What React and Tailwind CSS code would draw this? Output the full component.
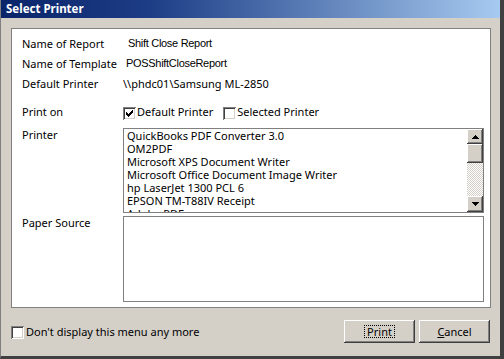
import React from "react";

const raised =
  "shadow-[inset_-1px_-1px_#404040,inset_1px_1px_#ffffff,inset_-2px_-2px_#808080,inset_2px_2px_#d4d0c8]";
const sunken =
  "shadow-[inset_1px_1px_#808080,inset_-1px_-1px_#ffffff,inset_2px_2px_#404040,inset_-2px_-2px_#d4d0c8]";

function Check({ checked, className = "" }) {
  return (
    <span
      className={`w-[13px] h-[13px] bg-white shrink-0 flex items-center justify-center ${sunken} ${className}`}
    >
      {checked && (
        <svg width="7" height="7" viewBox="0 0 7 7" shapeRendering="crispEdges">
          <path
            fill="#000"
            d="M6 0h1v1h-1z M5 1h2v1h-2z M0 2h1v1h-1z M4 2h3v1h-3z M0 3h2v1h-2z M3 3h3v1h-3z M0 4h5v1h-5z M1 5h3v1h-3z M2 6h1v1h-1z"
          />
        </svg>
      )}
    </span>
  );
}

function Arrow({ down }) {
  return (
    <svg width="7" height="4" viewBox="0 0 7 4" shapeRendering="crispEdges">
      <path
        fill="#000"
        d={
          down
            ? "M0 0h7v1h-7z M1 1h5v1h-5z M2 2h3v1h-3z M3 3h1v1h-1z"
            : "M3 0h1v1h-1z M2 1h3v1h-3z M1 2h5v1h-5z M0 3h7v1h-7z"
        }
      />
    </svg>
  );
}

const printers = [
  "QuickBooks PDF Converter 3.0",
  "OM2PDF",
  "Microsoft XPS Document Writer",
  "Microsoft Office Document Image Writer",
  "hp LaserJet 1300 PCL 6",
  "EPSON TM-T88IV Receipt",
  "Adobe PDF",
];

export default function App() {
  const font = "font-['Noto_Sans',sans-serif]";
  return (
    <div
      className={`w-[504px] h-[359px] flex flex-col bg-[#d4d0c8] border-l border-l-[#808080] border-r-[4px] border-r-[#404040] border-b-[3px] border-b-[#404040] text-[11px] text-black ${font} overflow-hidden`}
    >
      <div className="h-[18px] shrink-0 flex items-center pl-[5px] bg-[linear-gradient(to_right,#0a246a_0%,#1d3d86_30%,#a6caf0_100%)]">
        <span className="text-white font-bold text-[11.5px] leading-none">Select Printer</span>
      </div>

      <div className="mt-[10px] pl-[10px] pr-[9px]">
        <div className="h-[280px] bg-white border border-[#808080] flex flex-col pt-[4px] pl-[10px] pr-[6px]">
          <div className="h-[20px] flex items-center">
            <div className="w-[101px] leading-[13px]">Name of Report</div>
            <div className="pl-[5px] font-['Liberation_Sans',sans-serif] tracking-[-0.3px]">Shift Close Report</div>
          </div>
          <div className="h-[20px] flex items-center">
            <div className="w-[101px] leading-[13px]">Name of Template</div>
            <div className="pl-[3px] font-['Liberation_Sans',sans-serif] tracking-[-0.3px]">POSShiftCloseReport</div>
          </div>
          <div className="h-[20px] flex items-center">
            <div className="w-[101px] leading-[13px]">Default Printer</div>
            <div className="leading-[13px]">\\phdc01\Samsung ML-2850</div>
          </div>
          <div className="mt-[8px] h-[20px] flex items-center">
            <div className="w-[101px] leading-[13px]">Print on</div>
            <Check checked className="translate-y-[2px]" />
            <span className="ml-[1px] leading-[13px]">Default Printer</span>
            <Check className="ml-[10px] translate-y-[2px]" />
            <span className="ml-[1px] leading-[13px]">Selected Printer</span>
          </div>
          <div className="mt-[7px] h-[85px] flex">
            <div className="w-[101px] leading-[13px]">Printer</div>
            <div className="flex-1 border border-[#808080] flex min-w-0">
              <div className="flex-1 overflow-hidden pl-[3px] flex flex-col">
                {printers.map((p) => (
                  <div key={p} className="leading-[13px] h-[13px] shrink-0 whitespace-nowrap">
                    {p}
                  </div>
                ))}
              </div>
              <div className="w-[16px] shrink-0 flex flex-col">
                <div className={`h-[15px] bg-[#d4d0c8] flex items-center justify-center ${raised}`}>
                  <Arrow />
                </div>
                <div className={`h-[19px] bg-[#d4d0c8] ${raised}`} />
                <div className="flex-1 bg-[repeating-conic-gradient(#ffffff_0%_25%,#d4d0c8_0%_50%)] bg-[length:2px_2px]" />
                <div className={`h-[16px] bg-[#d4d0c8] flex items-center justify-center ${raised}`}>
                  <Arrow down />
                </div>
              </div>
            </div>
          </div>
          <div className="mt-[3px] h-[86px] flex">
            <div className="w-[101px] leading-[13px]">Paper Source</div>
            <div className="flex-1 border border-[#808080] bg-white" />
          </div>
        </div>
      </div>

      <div className="mt-[12px] pl-[10px] pr-[10px] h-[23px] flex items-center">
        <Check className="translate-y-[1px]" />
        <span className="ml-[2px] leading-[13px]">Don't display this menu any more</span>
        <div className="ml-auto flex gap-[4px]">
          <div className={`w-[71px] h-[23px] bg-[#d4d0c8] flex items-center justify-center ${raised}`}>
            <span className="border border-dotted border-black px-[2px] leading-[11px]">Print</span>
          </div>
          <div className={`w-[71px] h-[23px] bg-[#d4d0c8] flex items-center justify-center ${raised}`}>
            <span className="leading-[13px]">
              <span className="underline">C</span>ancel
            </span>
          </div>
        </div>
      </div>
    </div>
  );
}
